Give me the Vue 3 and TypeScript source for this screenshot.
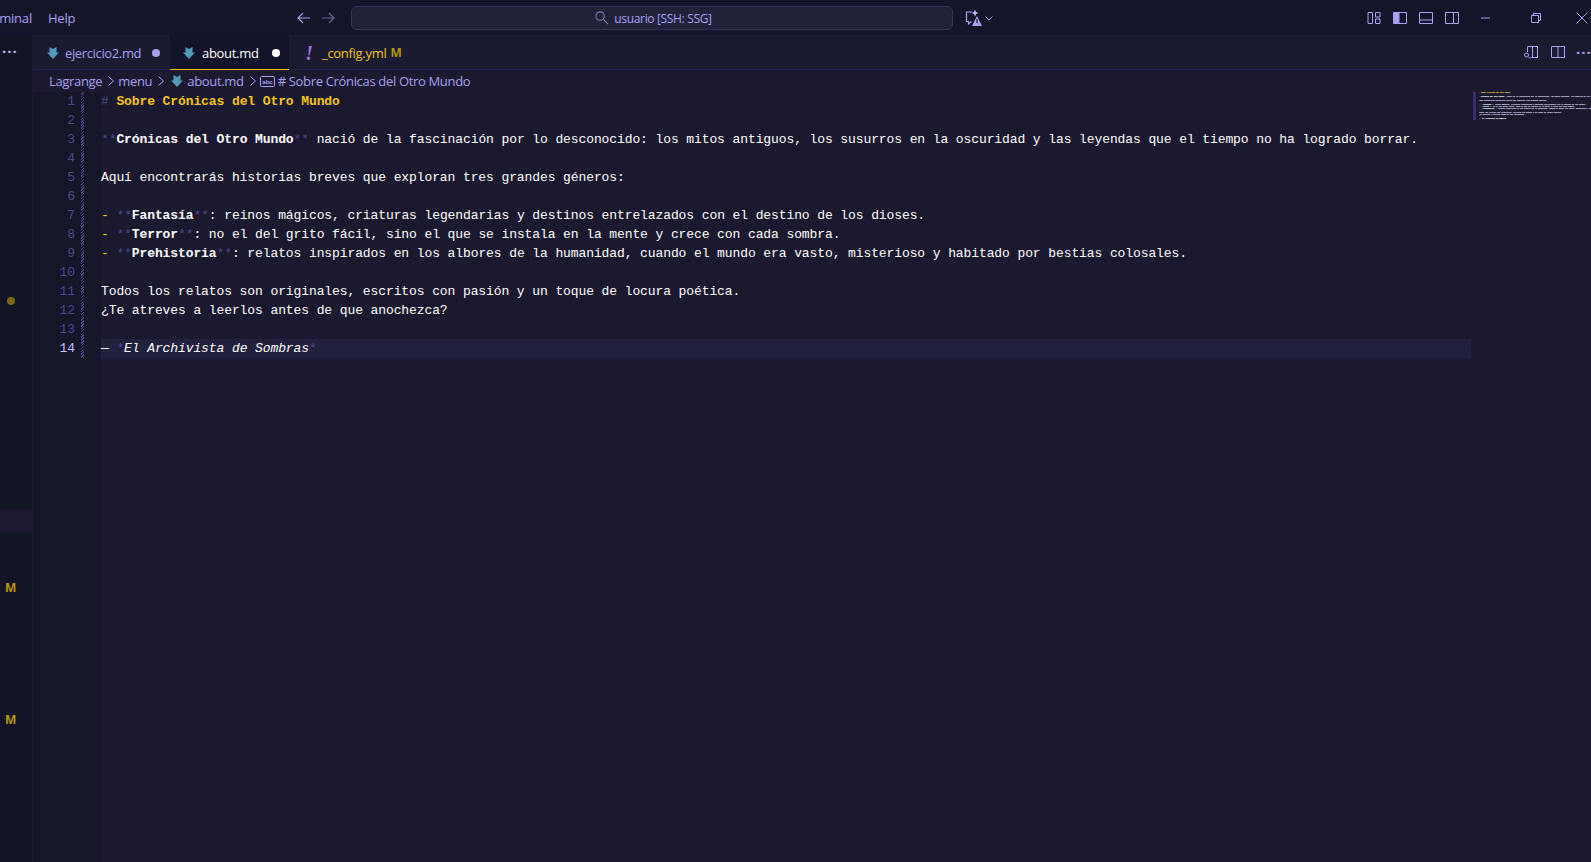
<script setup lang="ts">
interface Seg { t: string; c: string }
const lines: Seg[][] = [
  [{ t: '# ', c: 'dim' }, { t: 'Sobre Crónicas del Otro Mundo', c: 'head' }],
  [],
  [{ t: '**', c: 'dim' }, { t: 'Crónicas del Otro Mundo', c: 'bold' }, { t: '**', c: 'dim' }, { t: ' nació de la fascinación por lo desconocido: los mitos antiguos, los susurros en la oscuridad y las leyendas que el tiempo no ha logrado borrar.', c: '' }],
  [],
  [{ t: 'Aquí encontrarás historias breves que exploran tres grandes géneros:', c: '' }],
  [],
  [{ t: '-', c: 'dash' }, { t: ' ', c: '' }, { t: '**', c: 'dim' }, { t: 'Fantasía', c: 'bold' }, { t: '**', c: 'dim' }, { t: ': reinos mágicos, criaturas legendarias y destinos entrelazados con el destino de los dioses.', c: '' }],
  [{ t: '-', c: 'dash' }, { t: ' ', c: '' }, { t: '**', c: 'dim' }, { t: 'Terror', c: 'bold' }, { t: '**', c: 'dim' }, { t: ': no el del grito fácil, sino el que se instala en la mente y crece con cada sombra.', c: '' }],
  [{ t: '-', c: 'dash' }, { t: ' ', c: '' }, { t: '**', c: 'dim' }, { t: 'Prehistoria', c: 'bold' }, { t: '**', c: 'dim' }, { t: ': relatos inspirados en los albores de la humanidad, cuando el mundo era vasto, misterioso y habitado por bestias colosales.', c: '' }],
  [],
  [{ t: 'Todos los relatos son originales, escritos con pasión y un toque de locura poética.', c: '' }],
  [{ t: '¿Te atreves a leerlos antes de que anochezca?', c: '' }],
  [],
  [{ t: '—', c: '' }, { t: ' ', c: '' }, { t: '*', c: 'dim' }, { t: 'El Archivista de Sombras', c: 'ital' }, { t: '*', c: 'dim' }],
]
const mdIcon = 'M4.500 2 8 4l3.500-2v5.500H14L8 14 2 7.500h2.500z'
</script>

<template>
  <div class="app">
    <header class="title">
      <nav class="menu"><span class="term">Terminal</span><span>Help</span></nav>
      <div class="center">
        <svg class="arrow" viewBox="0 0 16 16" width="16" height="16"><path d="M14 8H2.500M7 3 2 8l5 5" fill="none" stroke="#a8a0f0" stroke-width="1.1"/></svg>
        <svg class="arrow off" viewBox="0 0 16 16" width="16" height="16"><path d="M2 8h11.500M9 3l5 5-5 5" fill="none" stroke="#6b6890" stroke-width="1.1"/></svg>
        <div class="search">
          <svg viewBox="0 0 16 16" width="15" height="15"><circle cx="6.500" cy="6.500" r="4.500" fill="none" stroke="#7f7ab0" stroke-width="1.1"/><path d="m10 10 5 5" stroke="#7f7ab0" stroke-width="1.1"/></svg>
          <span>usuario [SSH: SSG]</span>
        </div>
        <div class="copilot">
          <svg viewBox="0 0 20 20" width="20" height="20">
            <path d="M8 4H2.500v9.500h2v2.500l3-2.500" fill="none" stroke="#a8a0f0" stroke-width="1.2"/>
            <path d="M11 1.500l1 2.500 2.500 1-2.500 1-1 2.500-1-2.500L7.500 5l2.500-1z" fill="#c3beff"/>
            <path d="M13 8l5 10H8z" fill="#a8a0f0"/>
            <path d="M13 11v4" stroke="#14152a" stroke-width="1.2"/>
          </svg>
          <svg viewBox="0 0 10 10" width="10" height="10"><path d="M1.500 3.500 5 7l3.500-3.500" fill="none" stroke="#a8a0f0"/></svg>
        </div>
      </div>
      <div class="layout">
        <svg viewBox="0 0 16 16" width="16" height="16"><path d="M2 2.500h4.500v11H2zM9.500 2.500h4.500v4.500H9.500zM9.500 9h4.500v4.500H9.500z" fill="none" stroke="#a8a0f0"/></svg>
        <svg viewBox="0 0 16 16" width="16" height="16"><path d="M1.500 2.500h13v11h-13z" fill="none" stroke="#a8a0f0"/><path d="M1.500 2.500h6v11h-6z" fill="#a8a0f0"/></svg>
        <svg viewBox="0 0 16 16" width="16" height="16"><path d="M1.500 2.500h13v11h-13zM1.500 10h13" fill="none" stroke="#a8a0f0"/></svg>
        <svg viewBox="0 0 16 16" width="16" height="16"><path d="M1.500 2.500h13v11h-13zM9.500 2.500v11" fill="none" stroke="#a8a0f0"/></svg>
      </div>
      <div class="window">
        <svg viewBox="0 0 12 12" width="12" height="12"><path d="M1 6h9" stroke="#a8a0f0"/></svg>
        <svg viewBox="0 0 12 12" width="12" height="12"><path d="M1.500 3.500h7v7h-7zM3.500 3.500v-2h7v7h-2" fill="none" stroke="#a8a0f0"/></svg>
        <svg class="close" viewBox="0 0 12 12" width="12" height="12"><path d="M.5.500l11 11M11.500.500l-11 11" stroke="#a8a0f0"/></svg>
      </div>
    </header>
    <div class="body">
      <aside class="side">
        <div class="side-top">···</div>
        <div class="side-dot"></div>
        <div class="side-row"></div>
        <div class="side-m first">M</div>
        <div class="side-m second">M</div>
      </aside>
      <main class="col">
        <div class="tabs">
          <div class="tab first-tab">
            <svg class="ic" viewBox="0 0 16 16" width="16" height="16"><path :d="mdIcon" fill="#519aba"/></svg>
            <span class="name">ejercicio2.md</span><i class="dot"></i>
          </div>
          <div class="tab active">
            <svg class="ic" viewBox="0 0 16 16" width="16" height="16"><path :d="mdIcon" fill="#519aba"/></svg>
            <span class="name">about.md</span><i class="dot white"></i>
          </div>
          <div class="tab yml">
            <span class="bang">!</span><span class="name">_config.yml</span><b class="mod">M</b>
          </div>
          <div class="tab-actions">
            <svg viewBox="0 0 16 16" width="16" height="16"><path d="M4.500 8V2.500h10v11h-7M9.500 2.500v11" fill="none" stroke="#a8a0f0"/><circle cx="3.500" cy="11" r="2" fill="none" stroke="#a8a0f0"/><path d="m5 12.500 2 2" stroke="#a8a0f0"/></svg>
            <svg viewBox="0 0 16 16" width="16" height="16"><path d="M1.500 2.500h13v11h-13zM8 2.500v11" fill="none" stroke="#a8a0f0"/></svg>
            <span class="more">···</span>
          </div>
        </div>
        <div class="crumbs">
          <span>Lagrange</span>
          <svg class="sep" viewBox="0 0 8 12" width="8" height="12"><path d="m1.500 1.500 5 4.500-5 4.500" fill="none" stroke="#a8a0f0"/></svg>
          <span>menu</span>
          <svg class="sep" viewBox="0 0 8 12" width="8" height="12"><path d="m1.500 1.500 5 4.500-5 4.500" fill="none" stroke="#a8a0f0"/></svg>
          <svg class="cic" viewBox="0 0 16 16" width="16" height="16"><path :d="mdIcon" fill="#519aba"/></svg>
          <span>about.md</span>
          <svg class="sep" viewBox="0 0 8 12" width="8" height="12"><path d="m1.500 1.500 5 4.500-5 4.500" fill="none" stroke="#a8a0f0"/></svg>
          <svg class="sym" viewBox="0 0 15 11" width="15" height="11"><rect x=".5" y=".5" width="14" height="10" rx="1" fill="none" stroke="#a8a0f0"/><text x="7.500" y="7.500" text-anchor="middle" class="abc">abc</text></svg>
          <span># Sobre Crónicas del Otro Mundo</span>
        </div>
        <div class="editor">
          <div class="gutter">
            <div v-for="(l, i) in lines" :key="i" class="num" :class="{ cur: i === 13 }">{{ i + 1 }}</div>
          </div>
          <div class="hatch"></div>
          <div class="code">
            <div v-for="(l, i) in lines" :key="i" class="line" :class="{ curline: i === 13 }"><span v-for="(s, j) in l" :key="j" :class="s.c">{{ s.t }}</span></div>
          </div>
          <div class="minimap">
            <div class="mini-inner">
              <div v-for="(l, i) in lines" :key="i" class="mini-line"><span v-for="(s, j) in l" :key="j" :class="s.c">{{ s.t }}</span></div>
            </div>
          </div>
        </div>
      </main>
    </div>
  </div>
</template>

<style>
html, body { margin: 0; background: #14152a; overflow: hidden; }
</style>

<style scoped>
.app { width: 1591px; height: 862px; display: flex; flex-direction: column; overflow: hidden; font-family: "Open Sans", "Noto Sans", sans-serif; font-size: 13px; color: #a8a0f0; background: #14152a; }
.title { height: 35px; display: flex; align-items: center; flex: none; position: relative; }
.menu { display: flex; gap: 16px; margin-left: -20px; width: 290px; flex: none; letter-spacing: -0.2px; }
.center { display: flex; align-items: center; flex: none; margin-left: 26px; }
.arrow { margin-right: 8px; }
.arrow.off { margin-right: 15px; }
.search { width: 598px; height: 22px; border: 1px solid #35355a; border-radius: 6px; background: #20223a; display: flex; align-items: center; justify-content: center; gap: 5px; font-size: 12px; letter-spacing: -0.33px; padding-left: 2px; box-sizing: content-box; }
.search span { position: relative; top: 1px; }
.copilot { display: flex; align-items: center; margin-left: 11px; }
.layout { display: flex; gap: 10px; margin-left: auto; }
.window { display: flex; gap: 38px; margin: 0 3px 0 20px; }
.close { margin-left: -4px; }
.body { flex: 1; display: flex; min-height: 0; }
.side { width: 32px; flex: none; background: #131426; border-right: 1px solid #1b1a33; display: flex; flex-direction: column; }
.side-top { height: 34px; line-height: 32px; font-size: 15px; font-weight: 700; color: #c3beff; letter-spacing: 1px; margin-left: 2px; }
.side-dot { width: 8px; height: 8px; border-radius: 50%; background: #786519; margin: 228px 0 0 7px; }
.side-row { height: 22px; background: #1d1a32; margin-top: 205px; }
.side-m { color: #b8970e; font-weight: 700; font-size: 12px; line-height: 16px; padding-left: 5px; }
.side-m.first { margin-top: 48px; }
.side-m.second { margin-top: 116px; }
.col { flex: 1; min-width: 0; display: flex; flex-direction: column; background: #1b1930; }
.tabs { height: 34px; flex: none; display: flex; background: #1a1a30; border-bottom: 1px solid #24224a; box-sizing: content-box; position: relative; }
.tab { display: flex; align-items: center; height: 34px; flex: none; box-sizing: border-box; letter-spacing: -0.3px; }
.first-tab { width: 137px; padding-left: 12px; padding-top: 1px; letter-spacing: -0.36px; }
.tab .ic { margin-right: 4px; flex: none; }
.tab .name { flex: none; }
.dot { width: 8px; height: 8px; border-radius: 50%; background: #a8a0f0; margin-left: 11px; flex: none; }
.dot.white { background: #fff; margin-left: 13px; }
.active { width: 119px; padding-left: 11px; background: #12132a; color: #fff; box-shadow: inset 0 -1px 0 #f5c518; margin-bottom: -1px; height: 35px; }
.active .ic { margin-right: 5px; }
.yml { color: #f5c518; padding-left: 14px; padding-top: 1px; width: 140px; }
.bang { color: #a56ee8; font-weight: 700; font-style: italic; font-size: 20px; line-height: 20px; width: 12px; margin-right: 7px; text-align: center; font-family: "Liberation Serif", serif; }
.mod { color: #b8970e; margin-left: 4px; font-size: 12px; }
.tab-actions { margin-left: auto; display: flex; align-items: center; gap: 11px; }
.more { font-weight: 700; font-size: 15px; width: 15px; letter-spacing: 1px; color: #a8a0f0; margin-left: -1px; }
.crumbs { height: 22px; flex: none; display: flex; align-items: center; padding-left: 16px; letter-spacing: -0.33px; background: #1b1930; white-space: nowrap; }
.sep { margin: 0 3px 0 5px; flex: none; }
.cic { margin: 0 2px 0 1px; flex: none; }
.sym { margin: 0 3px 0 0; flex: none; }
.abc { font-family: "Liberation Sans", sans-serif; font-size: 6px; font-weight: 700; fill: #a8a0f0; letter-spacing: 0; }
.editor { flex: 1; display: flex; min-height: 0; position: relative; font-family: "Liberation Mono", monospace; font-size: 13px; letter-spacing: -0.1px; line-height: 19px; background: #1b1930; }
.gutter { width: 42px; background: #15162a; text-align: right; color: #4b4a8c; flex: none; }
.num { height: 19px; }
.num.cur { color: #c3beff; }
.hatch { flex: none; width: 26px; background-color: #15162a; background-image: repeating-linear-gradient(-45deg, #4a3f86 0 1px, transparent 1px 2px); background-size: 3px 266px; background-repeat: no-repeat; background-position: 6px 0; }
.code { width: 1370px; flex: none; color: #fff; white-space: pre; position: relative; }
.line { height: 19px; }
.curline { background: #21213e; }
.dim { color: #4b4a8c; }
.head { color: #f5c518; font-weight: 700; }
.bold { color: #fff; font-weight: 700; }
.dash { color: #f5c518; }
.ital { color: #fff; font-style: italic; }
.minimap { flex: 1; min-width: 0; overflow: hidden; position: relative; }
.mini-inner { border-left: 3px solid #3d2f70; margin-left: 2px; padding-left: 3px; height: 28px; width: 600px; font-size: 2px; line-height: 2px; letter-spacing: -0.2px; color: #d8d6ee; white-space: pre; font-weight: 700; text-shadow: 0 0 1px rgba(216, 214, 238, 0.7); }
.mini-line { height: 2px; overflow: hidden; }
</style>
